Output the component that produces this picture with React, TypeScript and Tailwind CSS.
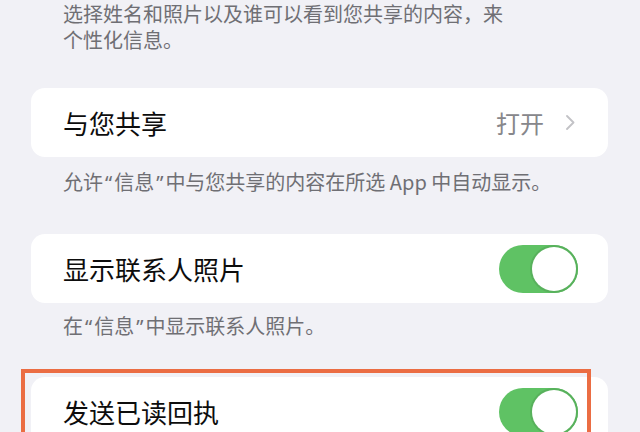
import React from "react";

const font = { fontFamily: '"Noto Sans CJK SC", "Noto Sans", sans-serif' };

function Q({ c }: { c: string }) {
  return (
    <span className="px-[2px]" style={{ fontFamily: '"Noto Sans", "Liberation Sans", sans-serif' }}>
      {c}
    </span>
  );
}

function Toggle() {
  return (
    <div className="relative w-[79px] h-[48px] rounded-full bg-[#5fc264] shrink-0">
      <div className="absolute right-[2px] top-[2px] w-[44px] h-[44px] rounded-full bg-white ring-2 ring-[#58b15c]" />
    </div>
  );
}

function Footnote({ children, className = "" }: { children: React.ReactNode; className?: string }) {
  return (
    <div className={"pl-[63px] pr-[40px] text-[20px] leading-[26px] text-[#6f6f74] " + className}>
      {children}
    </div>
  );
}

export default function App() {
  return (
    <div
      className="relative w-[640px] h-[432px] overflow-hidden bg-[#f1f1f6]"
      style={font}
    >
      <div className="pt-[1px]">
        <Footnote>
          <div>选择姓名和照片以及谁可以看到您共享的内容，来</div>
          <div>个性化信息。</div>
        </Footnote>

        <div className="mt-[35px] ml-[31px] w-[577px] h-[69px] rounded-[14px] bg-white flex items-center pl-[32px] pr-[33px]">
          <span className="text-[26px] text-[#0d0d0d] flex-1 leading-none">与您共享</span>
          <span className="text-[24px] text-[#87878b] leading-none">打开</span>
          <svg className="ml-[22px]" width="9" height="15" viewBox="0 0 9 15" fill="none">
            <path d="M1 1l6.5 6.5L1 14" stroke="#c2c2c6" strokeWidth="1.8" strokeLinecap="round" strokeLinejoin="round" />
          </svg>
        </div>

        <Footnote className="mt-[12px]">
          允许<Q c="“" />信息<Q c="”" />中与您共享的内容在所选 App 中自动显示。
        </Footnote>

        <div className="mt-[38px] ml-[31px] w-[577px] h-[69px] rounded-[14px] bg-white flex items-center pl-[32px] pr-[30px]">
          <span className="text-[26px] text-[#0d0d0d] flex-1 leading-none">显示联系人照片</span>
          <Toggle />
        </div>

        <Footnote className="mt-[10px]">
          在<Q c="“" />信息<Q c="”" />中显示联系人照片。
        </Footnote>

        <div className="mt-[37px] ml-[31px] w-[577px] h-[69px] rounded-[14px] bg-white flex items-center pl-[32px] pr-[30px]">
          <span className="text-[26px] text-[#0d0d0d] flex-1 leading-none">发送已读回执</span>
          <Toggle />
        </div>
      </div>

      <div className="absolute left-[21px] top-[369px] w-[570px] h-[80px] border-[4px] border-[#eb6d43] pointer-events-none" />
    </div>
  );
}
